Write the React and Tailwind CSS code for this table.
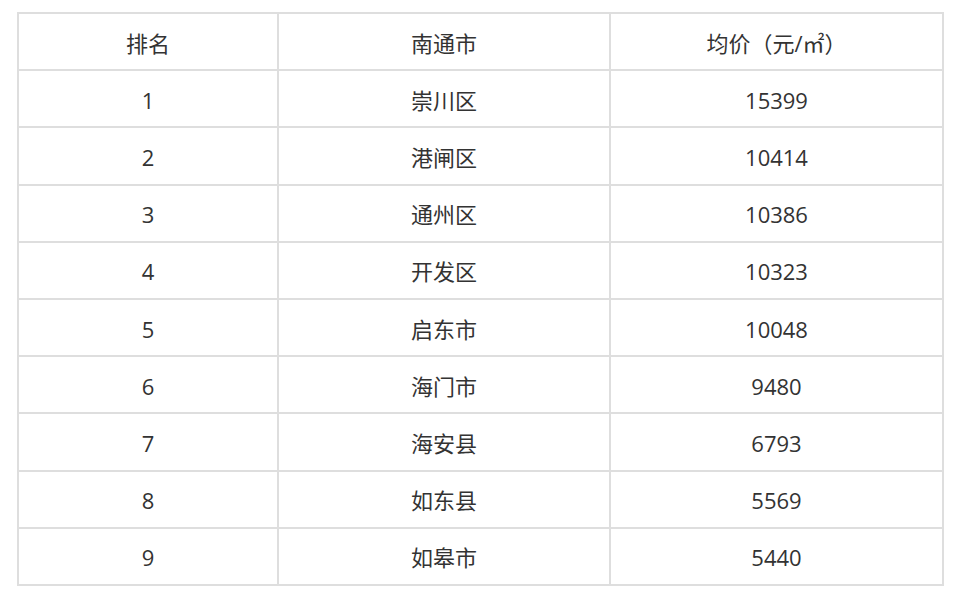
const rows = [
  { rank: 1, area: '崇川区', price: 15399 },
  { rank: 2, area: '港闸区', price: 10414 },
  { rank: 3, area: '通州区', price: 10386 },
  { rank: 4, area: '开发区', price: 10323 },
  { rank: 5, area: '启东市', price: 10048 },
  { rank: 6, area: '海门市', price: 9480 },
  { rank: 7, area: '海安县', price: 6793 },
  { rank: 8, area: '如东县', price: 5569 },
  { rank: 9, area: '如皋市', price: 5440 },
];

const cell = 'border-2 border-[#dedede] text-center align-middle h-[57.2px] pt-[3px] pb-0 px-0';

const App = () => {
  return (
    <div
      className="w-[960px] h-[603px] bg-white pt-[12px] pl-[17px] text-[#333] text-[22px]"
      style={{ fontFamily: '"Open Sans", "Noto Sans CJK SC", sans-serif' }}
    >
      <table className="w-[925px] border-collapse table-fixed">
        <colgroup>
          <col className="w-[260px]" />
          <col className="w-[332px]" />
          <col className="w-[333px]" />
        </colgroup>
        <thead>
          <tr>
            <th className={cell + ' font-normal'}>排名</th>
            <th className={cell + ' font-normal'}>南通市</th>
            <th className={cell + ' font-normal'}>均价（元/㎡）</th>
          </tr>
        </thead>
        <tbody>
          {rows.map((r) => (
            <tr key={r.rank}>
              <td className={cell}>{r.rank}</td>
              <td className={cell}>{r.area}</td>
              <td className={cell}>{r.price}</td>
            </tr>
          ))}
        </tbody>
      </table>
    </div>
  );
};

export default App;
